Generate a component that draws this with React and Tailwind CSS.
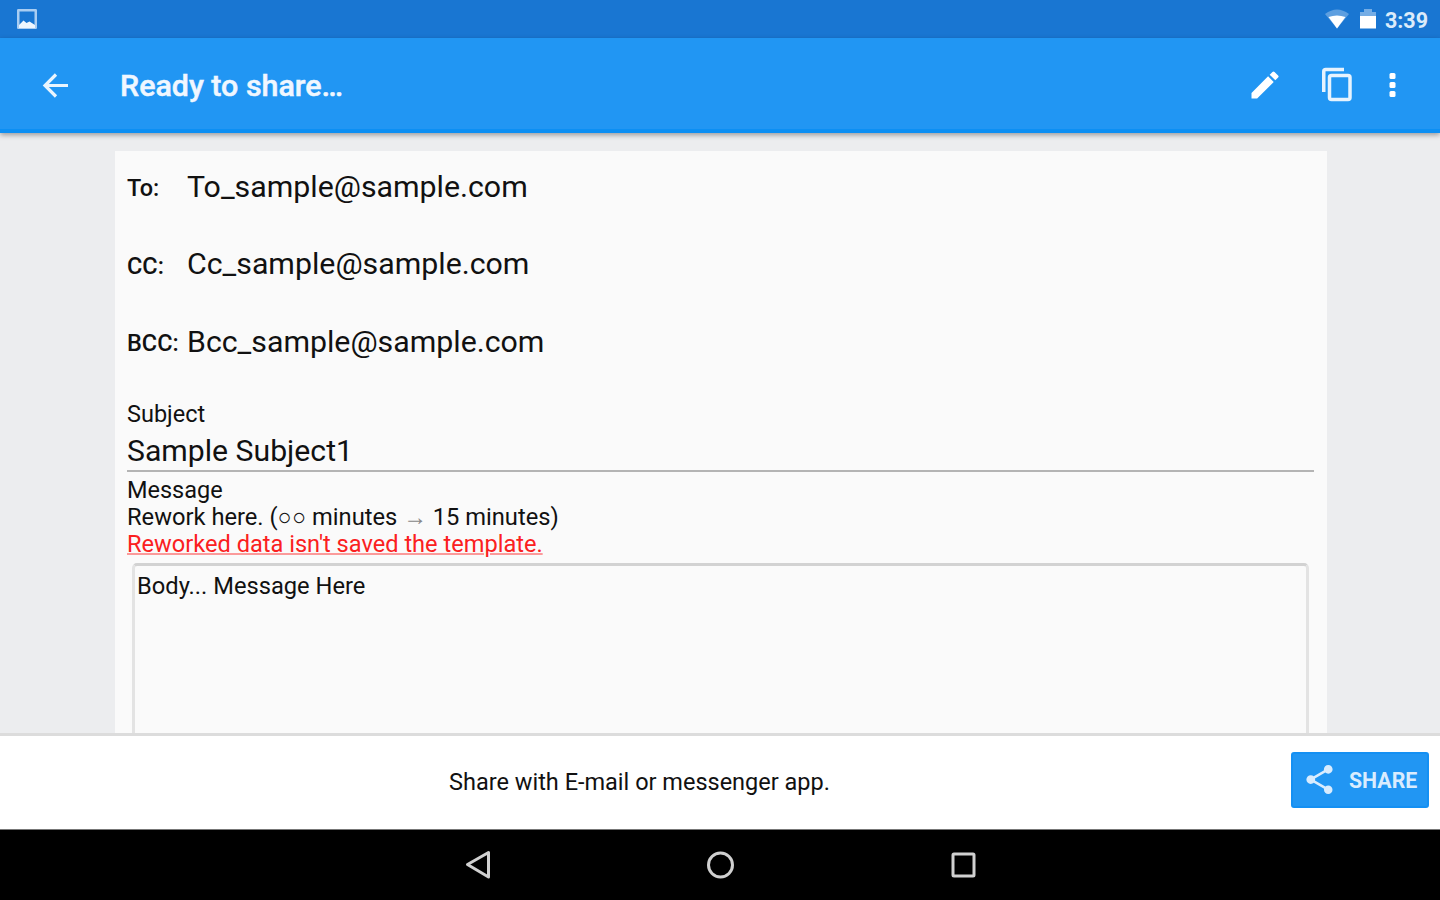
import React from 'react';
import { MdEdit, MdShare } from 'react-icons/md';

const recipients = [
  { label: 'To:', value: 'To_sample@sample.com' },
  { label: 'CC:', value: 'Cc_sample@sample.com' },
  { label: 'BCC:', value: 'Bcc_sample@sample.com' },
];

function StatusBar() {
  return (
    <div className="h-[38px] shrink-0 bg-[#1976d2] flex items-center justify-between pl-[17px] pr-3">
      <svg className="w-5 h-5" viewBox="0 0 20 20">
        <path d="M1.250 1.250h17.500v17.500H1.250z" fill="none" stroke="#a9cdf2" strokeWidth="2.500" strokeLinejoin="round" />
        <path d="M2 16l4.500-4.500 3 2.500 3-1.500L18 16v3H2z" fill="#eef6fe" />
      </svg>
      <div className="flex items-center">
        <svg className="w-6 h-5" viewBox="0 0 24 20">
          <path d="M0 5Q12-4 24 5L12 19.500z" fill="#5e9fe0" />
          <path d="M3.500 8Q12 5 20.500 8L12 19.500z" fill="#fff" />
        </svg>
        <svg className="w-4 h-[22px] ml-[11px]" viewBox="0 0 16 22">
          <path d="M0 4h4V1h8v3h4v7H0z" fill="#75ade5" />
          <path d="M0 8h16v12.500H0z" fill="#fff" />
        </svg>
        <span className="ml-[9px] pt-[3px] text-[21.5px] leading-none font-bold text-[#dcebfa]">3:39</span>
      </div>
    </div>
  );
}

function AppBar() {
  return (
    <header className="relative z-10 h-[95px] shrink-0 bg-[#2196f3] border-b-4 border-[#0c8ff3] shadow-[0_2px_5px_rgba(0,0,0,0.35)] flex items-center text-white pl-9 pr-[29px] pt-[3px]">
      <svg className="w-[38px] h-[38px]" viewBox="0 0 38 38" fill="none" stroke="#e9f5fe" strokeWidth="3.200">
        <path d="M32 19.500H9M20 8.500l-11 11 11 11" />
      </svg>
      <h1 className="ml-[46px] pt-[3px] text-[30.4px] leading-none font-medium text-[#f0f7ff] [-webkit-text-stroke:0.5px]">Ready to share…</h1>
      <div className="ml-auto flex items-center">
        <MdEdit className="w-9 h-9" />
        <svg className="w-9 h-9 ml-9" viewBox="0 0 36 36" fill="none" stroke="#e6f3fe" strokeWidth="3.500" strokeLinejoin="round">
          <path d="M4.750 25V4.500a2 2 0 0 1 2-2H25" />
          <rect x="10.500" y="8.500" width="20.500" height="24" rx="2" />
        </svg>
        <svg className="w-9 h-9 ml-5" viewBox="0 0 36 36" fill="currentColor">
          <rect x="14.500" y="6" width="6" height="6" rx="1.500" />
          <rect x="14.500" y="15" width="6" height="6" rx="1.500" />
          <rect x="14.500" y="24" width="6" height="6" rx="1.500" />
        </svg>
      </div>
    </header>
  );
}

function Recipient({ label, value }) {
  return (
    <div className="h-[72px] flex items-center">
      <span className="w-[60px] shrink-0 text-[23.5px] leading-none font-medium whitespace-nowrap pt-1">{label}</span>
      <span className="text-[30.3px] leading-none">{value}</span>
    </div>
  );
}

function ShareBar() {
  return (
    <footer className="h-24 shrink-0 bg-white border-t-[3px] border-[#dcdcdc] flex items-center pr-[11px] pb-[5px]">
      <p className="flex-1 text-center text-[23.5px] leading-none pr-3 pt-1.5">Share with E-mail or messenger app.</p>
      <button className="w-[138px] h-14 rounded-[3px] bg-[#2196f3] border-2 border-[#1490f3] flex items-center pl-[9px] text-[#d9ecfe]">
        <MdShare className="w-[35px] h-[35px] shrink-0 mb-0.5" />
        <span className="ml-3 pt-px text-[21.3px] leading-none font-bold">SHARE</span>
      </button>
    </footer>
  );
}

function NavBar() {
  return (
    <nav className="h-[71px] shrink-0 bg-black border-t border-[#777] flex justify-center">
      <svg className="w-[520px] h-[70px]" viewBox="0 0 520 70" fill="none" stroke="#d0d0d0" strokeWidth="3" strokeLinejoin="round">
        <path d="M28.500 22.500v24.500L7.500 34.500z" />
        <circle cx="260.500" cy="35" r="12" />
        <rect x="493" y="24" width="21" height="22" rx="1" />
      </svg>
    </nav>
  );
}

export default function App() {
  return (
    <div className="w-full h-screen flex flex-col overflow-hidden bg-[#ecedef] font-[Roboto,sans-serif] text-[#111]">
      <StatusBar />
      <AppBar />
      <main className="flex-1 min-h-0 overflow-hidden pt-[18px] pl-[115px] pr-[113px]">
        <div className="bg-[#fafafa] px-3 h-[600px]">
          <div className="flex flex-col gap-[5.5px]">
            {recipients.map((r) => (
              <Recipient key={r.label} label={r.label} value={r.value} />
            ))}
          </div>

          <p className="mt-[23px] text-[23.5px] leading-[27px]">Subject</p>
          <p className="h-[44px] mr-px border-b-2 border-[#b4b4b4] text-[30.2px] leading-[46px]">Sample Subject1</p>
          <p className="mt-[5px] text-[23.5px] leading-[27px]">Message</p>
          <p className="text-[23.7px] leading-[27px]">
            Rework here. (○○ minutes <span className="text-[#888]">→</span> 15 minutes)
          </p>
          <p className="text-[23.6px] leading-[27px] text-[#fb2020] underline decoration-[#fb9a9a] decoration-2">Reworked data isn&apos;t saved the template.</p>

          <div className="mt-[5px] ml-[5px] mr-1.5 h-[220px] rounded-t-[5px] border-x-[3px] border-t-[3px] border-x-[#e3e3e3] border-t-[#d2d2d2] px-0.5 pt-[7px] text-[23.7px] leading-[27px]">
            Body... Message Here
          </div>
        </div>
      </main>
      <ShareBar />
      <NavBar />
    </div>
  );
}
